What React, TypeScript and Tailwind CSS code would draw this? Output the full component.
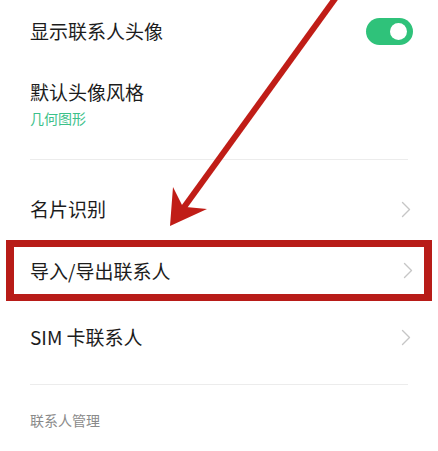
import React from "react";

const font = { fontFamily: '"Noto Sans CJK SC", "Noto Sans", sans-serif' };

const Chevron = () => (
  <svg width="10" height="17" viewBox="0 0 10 17" fill="none">
    <path d="M1.5 1.5 L8.5 8.5 L1.5 15.5" stroke="#c6c6c6" strokeWidth="1.4" strokeLinecap="round" strokeLinejoin="round" />
  </svg>
);

const Toggle = () => (
  <div className="w-[47px] h-[27px] rounded-full bg-[#2fc27a] flex items-center justify-end pr-[6px]">
    <div className="w-[17px] h-[17px] rounded-full bg-white" />
  </div>
);

const NavRow = ({ label }: { label: string }) => (
  <div className="h-[62px] flex items-center justify-between pl-[30px] pr-[27px]">
    <span className="text-[19px] leading-[26px] text-[#1c1c1c]">{label}</span>
    <Chevron />
  </div>
);

export default function App() {
  return (
    <div className="relative w-[438px] h-[451px] bg-white overflow-hidden" style={font}>
      {/* 显示联系人头像 */}
      <div className="h-[62px] flex items-center justify-between pl-[30px] pr-[25px]">
        <span className="text-[19px] leading-[26px] text-[#1c1c1c]">显示联系人头像</span>
        <Toggle />
      </div>

      {/* 默认头像风格 */}
      <div className="pt-[17px] px-[30px]">
        <div className="text-[19px] leading-[26px] text-[#1c1c1c]">默认头像风格</div>
        <div className="mt-[3px] text-[14px] leading-[20px] text-[#3cc18a]">几何图形</div>
      </div>

      <div className="mt-[31px] mx-[30px] h-px bg-[#ececec]" />

      <div className="mt-[18px]">
        <NavRow label="名片识别" />
      </div>

      {/* highlighted row */}
      <div className="mx-[6px] h-[61px] border-x-[8px] border-y-[7px] border-[#b81c18] flex items-center justify-between pl-[16px] pr-[11px]">
        <span className="text-[19px] leading-[26px] text-[#1c1c1c]">导入/导出联系人</span>
        <Chevron />
      </div>

      <div className="mt-[5px]">
        <NavRow label="SIM 卡联系人" />
      </div>

      <div className="mt-[16px] mx-[30px] h-px bg-[#ececec]" />

      <div className="mt-[25px] px-[30px] text-[14px] leading-[20px] text-[#8a8a8a]">联系人管理</div>

      {/* annotation arrow */}
      <svg className="absolute left-0 top-0 pointer-events-none" width="438" height="451" viewBox="0 0 438 451">
        <line x1="337" y1="-4" x2="182" y2="210" stroke="#c01d17" strokeWidth="6" />
        <polygon points="170,226 173,187 182,205 186,207 207,209" fill="#c01d17" />
      </svg>
    </div>
  );
}
